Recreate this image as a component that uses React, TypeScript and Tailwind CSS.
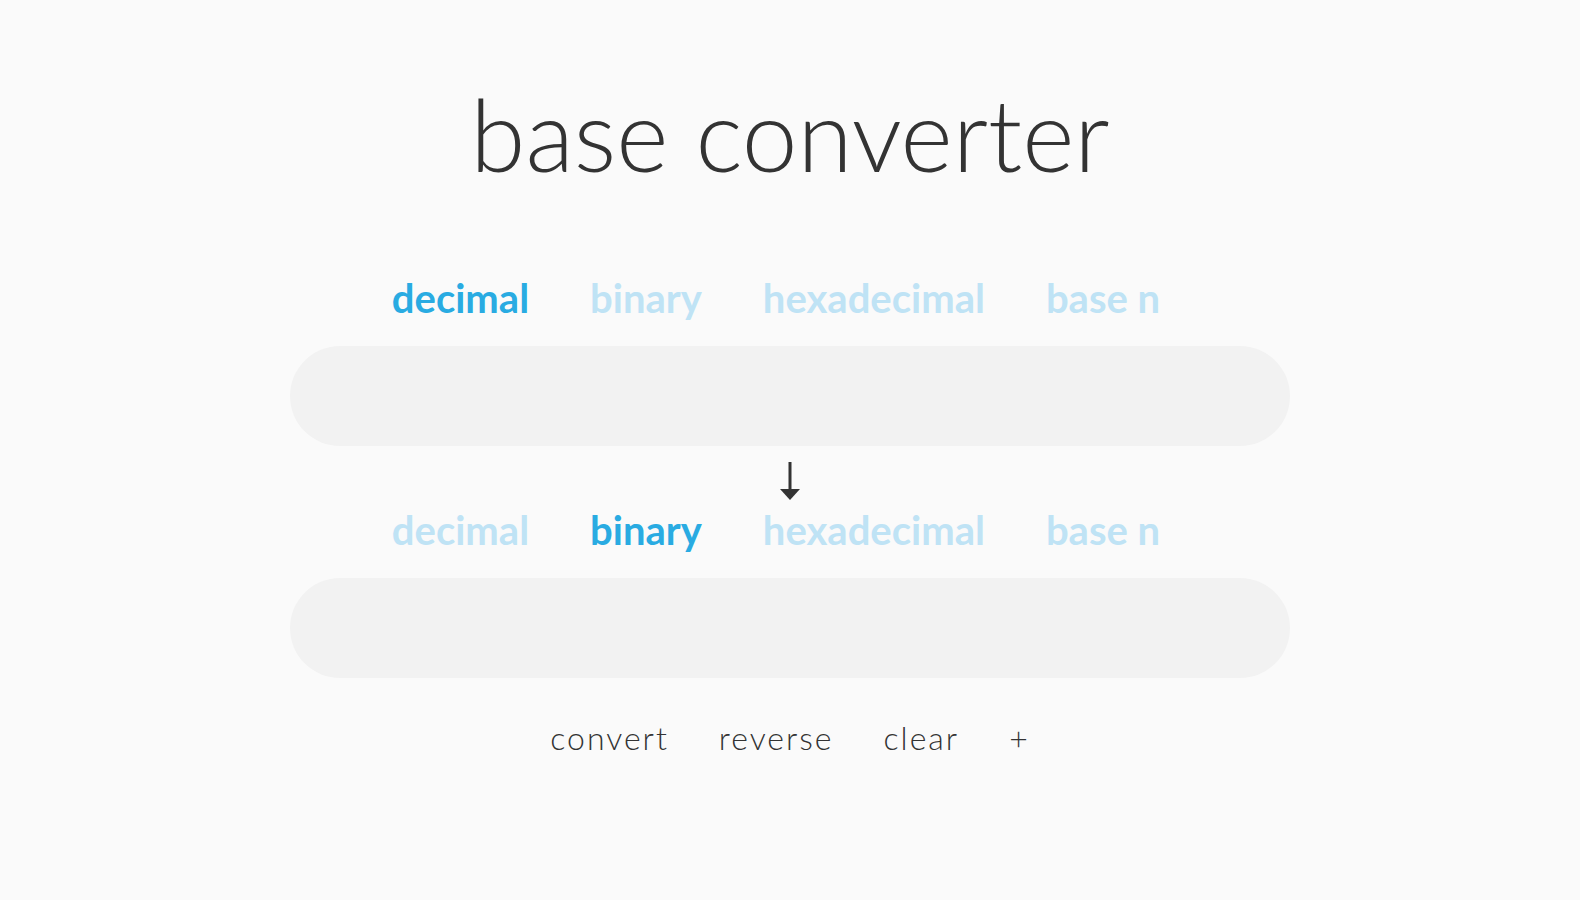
import React from "react";

const tabs = ["decimal", "binary", "hexadecimal", "base n"];

function TabRow({ active }: { active: number }) {
  return (
    <div className="flex justify-center gap-[61px] pr-[28px] text-[40px] leading-none font-bold">
      {tabs.map((t, i) => (
        <span key={t} className={i === active ? "text-[#29abe2]" : "text-[#bfe3f5]"}>
          {t}
        </span>
      ))}
    </div>
  );
}

export default function App() {
  return (
    <div
      className="min-h-[900px] w-full bg-[#fafafa] flex flex-col items-center text-[#333333]"
      style={{ fontFamily: "Lato, 'Open Sans', sans-serif" }}
    >
      <h1 className="mt-[83px] text-[100px] leading-none font-light">base converter</h1>
      <div className="mt-[95px]">
        <TabRow active={0} />
      </div>
      <div className="mt-[28px] w-[1000px] h-[100px] rounded-full bg-[#f2f2f2]" />
      <svg className="mt-[16px]" width="24" height="40" viewBox="0 0 24 40">
        <rect x="10.5" y="0" width="3" height="29" fill="#333333" />
        <polygon points="2,27 22,27 12,38" fill="#333333" />
      </svg>
      <div className="mt-[8px]">
        <TabRow active={1} />
      </div>
      <div className="mt-[28px] w-[1000px] h-[100px] rounded-full bg-[#f2f2f2]" />
      <div className="mt-[44px] flex gap-[50px] text-[32px] leading-none font-light tracking-[2px]">
        <span>convert</span>
        <span>reverse</span>
        <span>clear</span>
        <span>+</span>
      </div>
    </div>
  );
}
